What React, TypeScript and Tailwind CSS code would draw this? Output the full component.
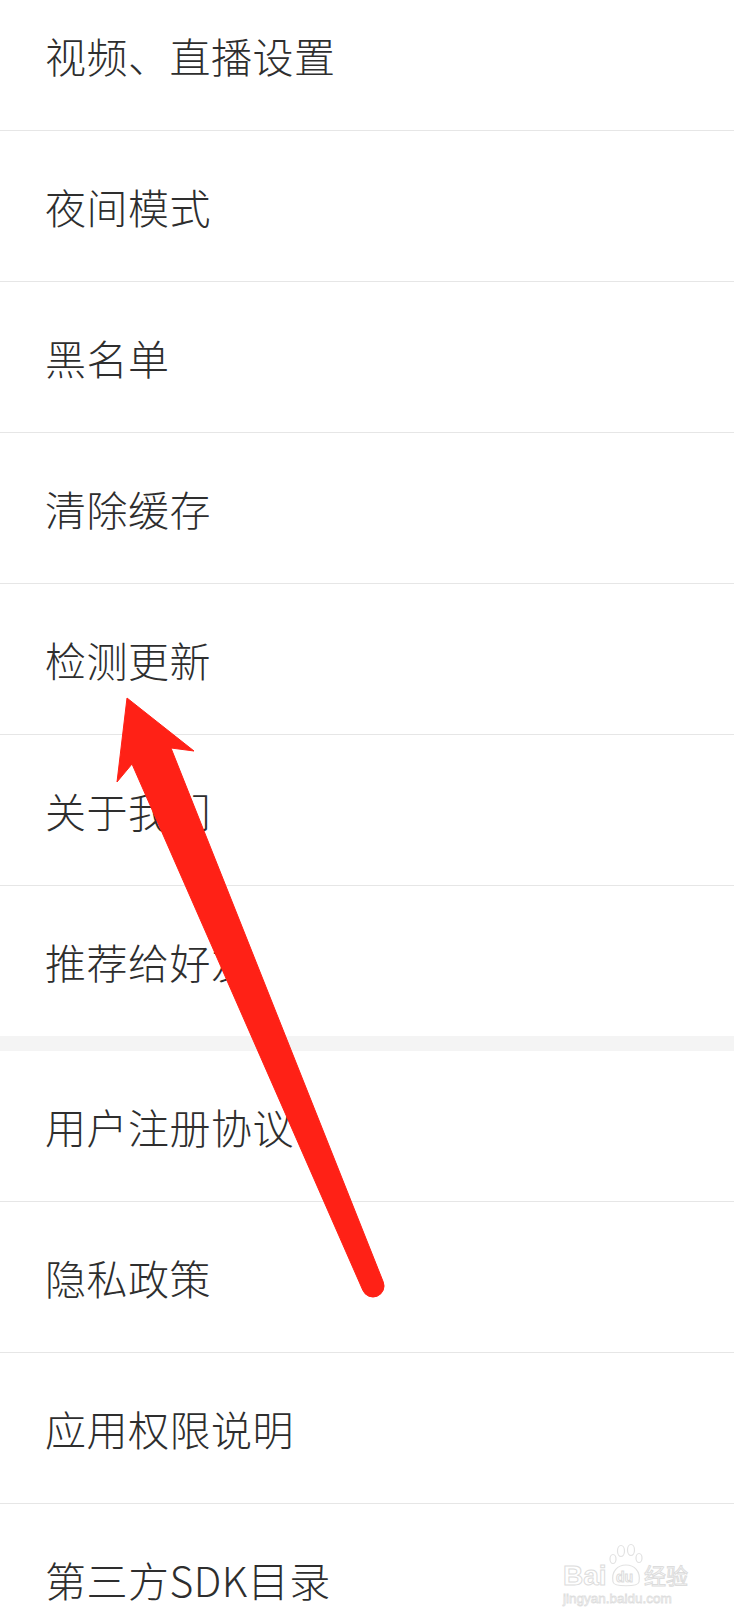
import React from "react";

const groupA = ["视频、直播设置", "夜间模式", "黑名单", "清除缓存", "检测更新", "关于我们", "推荐给好友"];
const groupB = ["用户注册协议", "隐私政策", "应用权限说明", "第三方SDK目录"];

function Row({ label, last }: { label: string; last?: boolean }) {
  return (
    <div
      className={
        "flex items-center bg-white pl-[45px] " +
        (last ? "h-[150px]" : "h-[151px] border-b border-[#e6e6e6]")
      }
    >
      <span className="text-[41px] font-light leading-none tracking-[0.5px] text-[#2e2e2e]">{label}</span>
    </div>
  );
}

function Watermark() {
  return (
    <svg
      className="pointer-events-none absolute left-[560px] top-[1540px]"
      width="134"
      height="70"
      viewBox="0 0 134 70"
      fill="none"
    >
      <g stroke="#e2e2e2" strokeWidth="1.2">
        {/* paw */}
        <ellipse cx="61" cy="11" rx="3.5" ry="5.5" />
        <ellipse cx="71" cy="10" rx="3.5" ry="5.5" />
        <ellipse cx="53" cy="19" rx="3" ry="4.5" />
        <ellipse cx="79" cy="18" rx="3" ry="4.5" />
        <path d="M53 42 C51 31 58 25 66 25 C74 25 81 31 79 42 C78 47 54 47 53 42 Z" />
      </g>
      <g fontFamily="'Liberation Sans', Arial, sans-serif" fill="white" stroke="#dcdcdc" strokeWidth="1">
        <text x="3" y="45" fontSize="28" fontWeight="700">Bai</text>
        <text x="56" y="42" fontSize="14" fontWeight="700">du</text>
      </g>
      <text
        x="84"
        y="44"
        fontSize="22"
        fill="white"
        stroke="#dcdcdc"
        strokeWidth="1"
        fontFamily="'Noto Sans CJK SC', sans-serif"
      >
        经验
      </text>
      <text
        x="3"
        y="63"
        fontSize="13.5"
        fill="white"
        stroke="#dedede"
        strokeWidth="0.8"
        fontFamily="'Liberation Sans', Arial, sans-serif"
      >
        jingyan.baidu.com
      </text>
    </svg>
  );
}

function Arrow() {
  return (
    <svg
      className="pointer-events-none absolute left-0 top-0"
      width="734"
      height="1624"
      viewBox="0 0 734 1624"
    >
      <path
        d="M127 698 L194 751 L171 748 L383.2 1281.8 A11 11 0 0 1 362.8 1290.2 L132 764 L117 782 Z"
        fill="#ff2116"
        stroke="#ff2116"
        strokeWidth="1"
        strokeLinejoin="round"
      />
    </svg>
  );
}

export default function App() {
  return (
    <div
      className="relative h-[1624px] w-[734px] overflow-hidden bg-white"
      style={{ fontFamily: "'Noto Sans CJK SC', 'Noto Sans', sans-serif" }}
    >
      <div className="-mt-[20px] flex flex-col">
        {groupA.map((t, i) => (
          <Row key={t} label={t} last={i === groupA.length - 1} />
        ))}
        <div className="h-[15px] bg-[#f4f4f4]" />
        {groupB.map((t, i) => (
          <Row key={t} label={t} last={i === groupB.length - 1} />
        ))}
      </div>
      <Watermark />
      <Arrow />
    </div>
  );
}
